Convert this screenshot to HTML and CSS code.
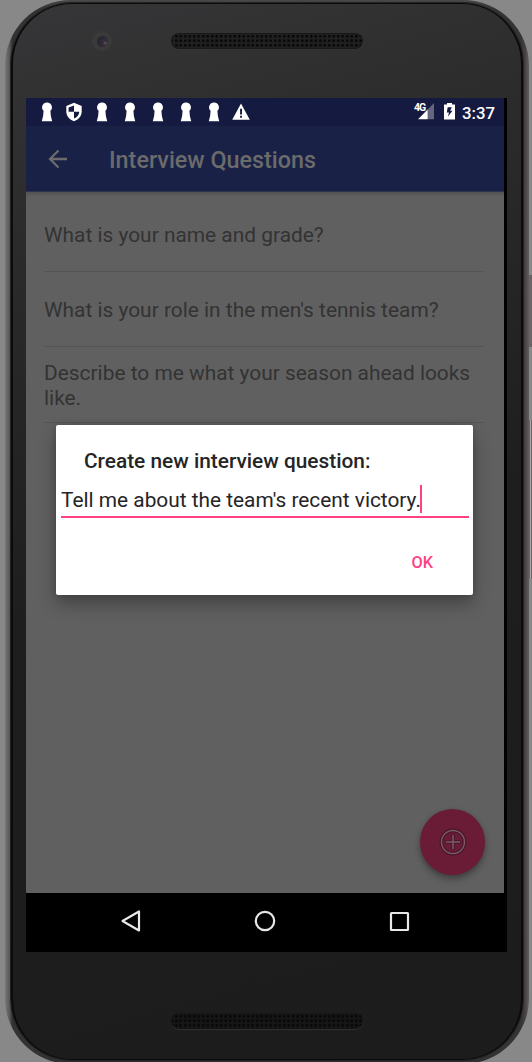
FILE: index.html
```html
<!DOCTYPE html>
<html lang="en">
<head>
<meta charset="utf-8">
<title>Interview Questions</title>
<link rel="stylesheet" href="styles.css">
</head>
<body>
<svg class="defs" width="0" height="0">
  <symbol id="keyhole" viewBox="0 0 12 20"><path d="M6 .4A4.800 4.800 0 0 0 2.600 8.700Q2.600 13 .8 19.200H11.200Q9.400 13 9.400 8.700A4.800 4.800 0 0 0 6 .4Z" fill="#fff"/></symbol>
</svg>
<div class="side-key power"></div>
<div class="side-key volume"></div>
<div class="phone">
  <div class="face">
    <div class="bezel-top">
      <div class="camera"><div class="lens"></div></div>
      <div class="speaker"></div>
    </div>
    <div class="screen">
      <div class="app">
        <div class="status">
          <div class="notifications">
            <svg width="12" height="20"><use href="#keyhole"/></svg>
            <svg class="wide" width="18" height="20" viewBox="0 0 18 20"><path d="M9 .8 16.700 4V9.500C16.700 14 13.400 18 9 19.200 4.600 18 1.300 14 1.300 9.500V4Z" fill="#fff"/><path d="M9 3.500V9.700H3.600V5.500ZM9 9.700H14.300C14 13 12 15.600 9 16.600Z" fill="#141a40"/></svg>
            <svg width="12" height="20"><use href="#keyhole"/></svg>
            <svg width="12" height="20"><use href="#keyhole"/></svg>
            <svg width="12" height="20"><use href="#keyhole"/></svg>
            <svg width="12" height="20"><use href="#keyhole"/></svg>
            <svg width="12" height="20"><use href="#keyhole"/></svg>
            <svg class="wide" width="18" height="20" viewBox="0 0 18 20"><path d="M9 1.500 17.800 17.700H.2Z" fill="#fff"/><path d="M8.100 6.800H10V12.400H8.100ZM8.100 13.800H10V15.700H8.100Z" fill="#141a40"/></svg>
          </div>
          <div class="indicators">
            <div class="signal"><span class="network">4G</span><svg width="16" height="17" viewBox="0 0 16 17"><path d="M16 0V16.300H9.700V6.500Z" fill="#62667f"/><path d="M9.700 6.500V16.300H0Z" fill="#fff"/></svg></div>
            <svg width="11" height="17" viewBox="0 0 11 17"><path d="M3 0H8V1.500H11V16.500H0V1.500H3Z" fill="#fff"/><path d="M7.800 4.300H3.700L2.800 9.500H5L3.800 13.800 8.500 7.800H6.200Z" fill="#141a40"/></svg>
            <span class="clock">3:37</span>
          </div>
        </div>
        <div class="toolbar">
          <svg width="20" height="20" viewBox="0 0 20 20"><path d="M19 10H2M10.500 1.500 2 10 10.500 18.500" fill="none" stroke="#6b6b6b" stroke-width="2.300"/></svg>
          <span class="heading">Interview Questions</span>
        </div>
        <div class="content">
          <div class="question">What is your name and grade?</div>
          <div class="question">What is your role in the men's tennis team?</div>
          <div class="question">Describe to me what your season ahead looks like.</div>
        </div>
        <div class="dialog">
          <div class="dialog-title">Create new interview question:</div>
          <div class="field"><span class="value">Tell me about the team's recent victory.</span><span class="caret"></span></div>
          <div class="actions">OK</div>
        </div>
        <div class="fab">
          <svg width="28" height="28" viewBox="0 0 28 28" fill="none"><circle cx="14" cy="14" r="11.600" stroke="#45182a" stroke-width="3.600"/><path d="M14 6.400V21.600M6.400 14H21.600" stroke="#45182a" stroke-width="3.600"/><circle cx="14" cy="14" r="11.500" stroke="#7f5868" stroke-width="1.400"/><path d="M14 7V21M7 14H21" stroke="#7f5868" stroke-width="1.500"/></svg>
        </div>
      </div>
      <div class="navbar">
        <svg width="22" height="24" viewBox="0 0 22 24"><path d="M19 2.500V21.500L2.500 12Z" fill="none" stroke="#e8e8e8" stroke-width="2.200" stroke-linejoin="round"/></svg>
        <svg width="22" height="24" viewBox="0 0 22 24"><circle cx="11" cy="12" r="9.200" fill="none" stroke="#e8e8e8" stroke-width="2.200"/></svg>
        <svg width="22" height="24" viewBox="0 0 22 24"><rect x="3" y="4" width="17" height="17" rx=".5" fill="none" stroke="#e8e8e8" stroke-width="2.200"/></svg>
      </div>
    </div>
    <div class="speaker bottom"></div>
  </div>
</div>
</body>
</html>
```
FILE: styles.css
```css
* { box-sizing: border-box; }
body { margin: 0; width: 532px; height: 1062px; overflow: hidden; background: #888; font-family: Roboto, sans-serif; position: relative; }
svg { display: block; flex: none; }
.defs { position: absolute; }
.phone { height: 1064px; margin: 0 3px 0 5px; padding: 3px 6px 4px; border-radius: 66px; background: linear-gradient(#474747, transparent 10px, transparent 1050px, #303030), linear-gradient(90deg, #777 0, #555 5px, #333 7px, #353334 516px, #454143 520px, #625d5f 524px); }
.face { height: 1057px; border: 1px solid #0b0b0b; border-width: 1px 2px; border-radius: 61px; background: linear-gradient(165deg, #363638 0, #2b2b2b 20%, #1e1e1f 52%, #1c1c1c 100%); overflow: hidden; padding: 0 12px 0 13px; box-shadow: 0 0 0 1px #232323; }
.bezel-top { height: 94px; position: relative; padding-top: 29px; }
.camera { position: absolute; left: 66px; top: 27px; width: 20px; height: 20px; border-radius: 50%; background: #3a3a3b; display: grid; place-items: center; }
.lens { width: 11px; height: 11px; border-radius: 50%; background: radial-gradient(circle at 75% 65%, #75565d 0, #37303a 18%, #272631 60%); }
.speaker { width: 192px; height: 16px; margin-left: 145px; border-radius: 8px; background: radial-gradient(circle at center, #060606 0, #080808 1.1px, transparent 1.7px) 3px 1px / 4.5px 4.5px, #202020; box-shadow: 1px 1px 0 #333, inset 0 0 0 1px #191919; }
.screen { width: 481px; height: 854px; background: #000; }
.speaker.bottom { margin-top: 61px; background-color: #161616; box-shadow: 0 1px 0 #303030; }
.app { position: relative; width: 478px; height: 795px; background: #606060; display: flex; flex-direction: column; overflow: hidden; }
.status { height: 28px; background: #141a40; color: #fff; display: flex; justify-content: space-between; padding: 4px 9px 0 14.500px; }
.notifications { display: flex; gap: 15.850px; }
.wide { margin: 0 -3px; }
.indicators { display: flex; gap: 10px; padding-top: 1px; }
.signal { position: relative; }
.network { position: absolute; left: -4px; top: 0; font-size: 10.500px; line-height: 9px; font-weight: 700; letter-spacing: -1px; }
.clock { font-size: 16.800px; line-height: 20px; font-weight: 500; margin-left: -3px; }
.toolbar { height: 66px; background: #1a2147; border-bottom: 1px solid #30344d; color: #6b6b6b; display: flex; align-items: center; padding-left: 22px; gap: 41px; flex: none; }
.heading { font-size: 23.350px; font-weight: 500; line-height: 28px; padding-top: 2px; }
.content { padding: 4px 20px 0 18px; background: linear-gradient(#525252, #606060 5px); }
.question { height: 75.500px; display: flex; align-items: center; border-bottom: 1px solid #545454; color: #333; font-size: 20.900px; line-height: 24.500px; padding-top: 3px; }
.dialog { position: absolute; left: 30px; top: 327px; width: 417px; height: 170px; background: #fff; border-radius: 2px; box-shadow: 0 9px 18px rgba(0,0,0,.3), 0 0 6px rgba(0,0,0,.16); color: #252525; padding: 23px 4px 0 5px; }
.dialog-title { font-size: 20.850px; line-height: 26px; font-weight: 500; padding-left: 23px; }
.field { height: 44px; border-bottom: 2px solid #ff4081; display: flex; align-items: center; padding-top: 9px; }
.value { font-size: 20.850px; line-height: 26px; }
.caret { width: 2px; height: 28px; background: #ff4081; margin: -2px 0 0 -1px; }
.actions { color: #ff4081; font-size: 16.300px; line-height: 20px; font-weight: 500; text-align: right; padding: 35px 36px 0 0; }
.fab { position: absolute; left: 394px; top: 711px; width: 65px; height: 66px; border-radius: 50%; background: #6a1b36; display: grid; place-items: center; box-shadow: 0 5px 7px rgba(0,0,0,.25), 0 1px 4px rgba(0,0,0,.18); }
.navbar { height: 59px; padding: 16px 97px 0 93.500px; display: flex; justify-content: space-between; }
.side-key { position: absolute; right: 0; width: 3px; }
.power { top: 275px; height: 72px; background: #6b6467; }
.volume { top: 420px; height: 159px; background: linear-gradient(90deg, #6b6467 1px, #aaa5a7 1px, #aaa5a7 2px, #6b6467 2px); }
```
